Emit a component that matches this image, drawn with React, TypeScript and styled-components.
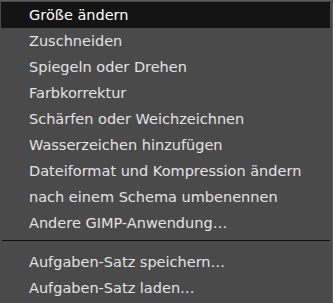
import styled, { createGlobalStyle } from 'styled-components';

const Global = createGlobalStyle`
  html, body {
    margin: 0;
    padding: 0;
    background: #4a4a4a;
  }
`;

const Menu = styled.ul`
  list-style: none;
  margin: 0;
  width: 333px;
  height: 303px;
  box-sizing: border-box;
  padding: 1px 2px 2px 1px;
  background: #4a4a4a;
  border-top: 1px solid #5c5c5c;
  border-right: 1px solid #5c5c5c;
  font-family: "DejaVu Sans", sans-serif;
  font-size: 14.5px;
  color: #e3e3e3;
`;

const Item = styled.li<{ $active?: boolean }>`
  height: 26px;
  display: flex;
  align-items: center;
  padding-left: 28px;
  padding-bottom: 1px;
  box-sizing: border-box;
  background: ${(p) => (p.$active ? '#141414' : 'transparent')};
  color: ${(p) => (p.$active ? '#ffffff' : '#e3e3e3')};
  cursor: default;
`;

const Separator = styled.li`
  height: 1px;
  margin: 4px 0 8px 1px;
  background: #111111;
`;

const top = [
  'Größe ändern',
  'Zuschneiden',
  'Spiegeln oder Drehen',
  'Farbkorrektur',
  'Schärfen oder Weichzeichnen',
  'Wasserzeichen hinzufügen',
  'Dateiformat und Kompression ändern',
  'nach einem Schema umbenennen',
  'Andere GIMP-Anwendung…',
];

const bottom = ['Aufgaben-Satz speichern…', 'Aufgaben-Satz laden…'];

export default function App() {
  return (
    <>
      <Global />
      <Menu>
        {top.map((t, i) => (
          <Item key={t} $active={i === 0}>{t}</Item>
        ))}
        <Separator />
        {bottom.map((t) => (
          <Item key={t}>{t}</Item>
        ))}
      </Menu>
    </>
  );
}
